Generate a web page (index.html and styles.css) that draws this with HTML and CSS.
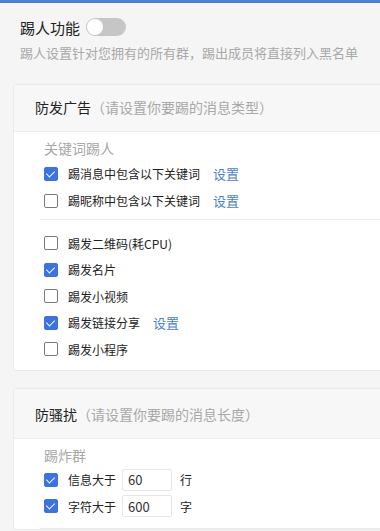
FILE: index.html
```html
<!DOCTYPE html>
<html lang="zh-CN">
<head>
  <meta charset="UTF-8">
  <title>踢人功能</title>
  <link rel="stylesheet" href="styles.css">
</head>
<body>
  <div class="topbar"></div>

  <!-- Intro -->
  <div class="intro">
    <div class="intro-title">
      <span>踢人功能</span>
      <span class="switch"><span class="knob"></span></span>
    </div>
    <p class="intro-desc">踢人设置针对您拥有的所有群，踢出成员将直接列入黑名单</p>
  </div>

  <!-- Ads -->
  <div class="card">
    <div class="card-head">防发广告<span class="hint">（请设置你要踢的消息类型）</span></div>
    <div class="card-body">
      <div class="group-label">关键词踢人</div>
      <label class="row row-tall"><span class="box checked"></span>踢消息中包含以下关键词<a class="link">设置</a></label>
      <label class="row row-tall"><span class="box"></span>踢昵称中包含以下关键词<a class="link">设置</a></label>
      <div class="divider"></div>
      <div class="list">
        <label class="row"><span class="box"></span>踢发二维码(耗CPU)</label>
        <label class="row"><span class="box checked"></span>踢发名片</label>
        <label class="row"><span class="box"></span>踢发小视频</label>
        <label class="row"><span class="box checked"></span>踢发链接分享<a class="link">设置</a></label>
        <label class="row"><span class="box"></span>踢发小程序</label>
      </div>
    </div>
  </div>

  <!-- Flood -->
  <div class="card">
    <div class="card-head card-head-2">防骚扰<span class="hint">（请设置你要踢的消息长度）</span></div>
    <div class="card-body">
      <div class="group-label">踢炸群</div>
      <label class="row"><span class="box checked"></span>信息大于<input class="num" value="60">行</label>
      <label class="row"><span class="box checked"></span>字符大于<input class="num" value="600">字</label>
      <div class="divider divider-low"></div>
    </div>
  </div>
</body>
</html>
```

FILE: styles.css
```css
/* General */
body {
  margin: 0;
  background-color: #f5f5f5;
  font-family: "Microsoft YaHei", "Noto Sans CJK SC", "Noto Sans", sans-serif;
  color: #333;
  overflow: hidden;
}

.topbar {
  height: 3px;
  background-color: #4a80d2;
}

/* Intro */
.intro {
  padding: 14px 20px 0;
  height: 67px;
}

.intro-title {
  display: flex;
  align-items: center;
  gap: 6px;
  font-size: 15px;
  color: #222;
  height: 20px;
}

.switch {
  position: relative;
  width: 40px;
  height: 18px;
  border-radius: 9px;
  background-color: #c6c6c6;
}

.switch .knob {
  position: absolute;
  left: 1px;
  top: 1px;
  width: 16px;
  height: 16px;
  border-radius: 50%;
  background-color: #fff;
}

.intro-desc {
  margin: 7px 0 0;
  font-size: 13px;
  color: #a8a8a8;
  line-height: 18px;
}

/* Cards */
.card {
  margin-left: 13px;
  background-color: #fff;
  border: 1px solid #ebebeb;
  border-right: none;
  border-radius: 4px 0 0 4px;
  margin-bottom: 17px;
}

.card-head {
  height: 46px;
  line-height: 44px;
  padding-left: 21px;
  background-color: #f7f7f7;
  border-bottom: 1px solid #ececec;
  border-radius: 4px 0 0 0;
  font-size: 14px;
  color: #222;
}

.card-head-2 {
  height: 49px;
  line-height: 50px;
}

.hint {
  color: #a8a8a8;
}

.card-body {
  padding: 6px 0 0 30px;
}

.group-label {
  font-size: 14px;
  color: #a8a8a8;
  line-height: 20px;
  margin-bottom: 2px;
}

.row {
  display: flex;
  align-items: center;
  height: 26.5px;
  font-size: 12px;
  color: #222;
}

.row-tall {
  height: 27px;
}

.list {
  padding: 10px 0 7px;
}

.box {
  width: 12px;
  height: 12px;
  border: 1px solid #7a7a7a;
  border-radius: 2px;
  margin-right: 10px;
  background-color: #fff;
  position: relative;
}

.box.checked {
  border-color: #3d73de;
  background-color: #3d73de;
}

.box.checked::after {
  content: "";
  position: absolute;
  left: 3px;
  top: 1px;
  width: 4px;
  height: 7px;
  border: solid #fff;
  border-width: 0 1.5px 1.5px 0;
  transform: rotate(45deg);
}

.link {
  color: #4a7fc8;
  font-size: 13px;
  margin-left: 13px;
  cursor: pointer;
}

.divider {
  height: 1px;
  background-color: #ececec;
  margin: 5px 0 0 -4px;
}

.divider-low {
  margin-top: 8px;
}

.num {
  width: 38px;
  height: 20px;
  margin: 0 8px 0 6px;
  padding: 0 5px;
  border: 1px solid #e6e6e6;
  border-radius: 2px;
  font-family: inherit;
  font-size: 13px;
  color: #333;
  box-sizing: content-box;
}
```
